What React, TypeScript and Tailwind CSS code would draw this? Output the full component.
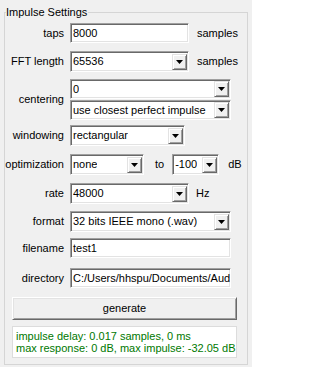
import React from 'react'

const sunken =
  'border border-t-[#a0a0a0] border-l-[#a0a0a0] border-b-white border-r-white shadow-[inset_1px_1px_0_#696969,inset_-1px_-1px_0_#e3e3e3] bg-white'

function Arrow() {
  return (
    <span className="flex h-[16px] w-[15px] shrink-0 items-center justify-center border border-t-[#e3e3e3] border-l-[#e3e3e3] border-b-[#696969] border-r-[#696969] bg-[#f0f0f0] shadow-[inset_1px_1px_0_#ffffff,inset_-1px_-1px_0_#a0a0a0]">
      <svg width="7" height="4" viewBox="0 0 7 4">
        <path d="M0 0h7L3.5 4z" fill="#000" />
      </svg>
    </span>
  )
}

function Combo({ value, w, h = 21 }: { value: string; w: string; h?: number }) {
  return (
    <div
      className={`${sunken} ${w} ${h === 21 ? 'h-[21px]' : 'h-[20px]'} flex shrink-0 items-center justify-between pl-[2px] pr-[1px]`}
    >
      <span className="truncate">{value}</span>
      <Arrow />
    </div>
  )
}

function Edit({ value, w }: { value: string; w: string }) {
  return (
    <div className={`${sunken} ${w} flex h-[20px] shrink-0 items-center overflow-hidden whitespace-nowrap pl-[2px]`}>
      {value}
    </div>
  )
}

function Row({ label, mt, children }: { label: string; mt: string; children: React.ReactNode }) {
  return (
    <div className={`flex items-center ${mt}`}>
      <span className="w-[59px] shrink-0 text-right">{label}</span>
      <div className="ml-[6px] flex items-center">{children}</div>
    </div>
  )
}

export default function App() {
  return (
    <div
      className="h-[367px] w-[252px] overflow-hidden bg-[#f0f0f0] pt-[12px] pl-[4px] text-[11px] leading-[13px] text-black"
      style={{ fontFamily: '"Liberation Sans", Arial, sans-serif' }}
    >
      <div className="relative h-[353px] w-[244px] border border-[#d5d5d5]">
        <span className="absolute -top-[7px] left-[1px] bg-[#f0f0f0] pr-[1px]">Impulse Settings</span>

        <Row label="taps" mt="mt-[10px]">
          <Edit value="8000" w="w-[119px]" />
          <span className="ml-[8px]">samples</span>
        </Row>

        <Row label="FFT length" mt="mt-[8px]">
          <Combo value="65536" w="w-[119px]" />
          <span className="ml-[8px]">samples</span>
        </Row>

        <Row label="centering" mt="mt-[7px]">
          <div className="flex flex-col gap-[1px]">
            <Combo value="0" w="w-[161px]" h={20} />
            <Combo value="use closest perfect impulse" w="w-[161px]" h={20} />
          </div>
        </Row>

        <Row label="windowing" mt="mt-[5px]">
          <Combo value="rectangular" w="w-[115px]" />
        </Row>

        <Row label="optimization" mt="mt-[8px]">
          <Combo value="none" w="w-[74px]" />
          <span className="ml-[11px]">to</span>
          <Combo value="-100" w="w-[47px] ml-[8px]" />
          <span className="ml-[9px]">dB</span>
        </Row>

        <Row label="rate" mt="mt-[8px]">
          <Combo value="48000" w="w-[119px]" />
          <span className="ml-[7px]">Hz</span>
        </Row>

        <Row label="format" mt="mt-[7px]">
          <Combo value="32 bits IEEE mono (.wav)" w="w-[161px]" />
        </Row>

        <Row label="filename" mt="mt-[6px]">
          <Edit value="test1" w="w-[161px]" />
        </Row>

        <Row label="directory" mt="mt-[10px]">
          <Edit value="C:/Users/hhspu/Documents/Audi" w="w-[161px]" />
        </Row>

        <button className="mt-[9px] ml-[7px] flex h-[23px] w-[225px] items-center justify-center border border-t-white border-l-white border-b-[#696969] border-r-[#696969] bg-[#f0f0f0] shadow-[inset_1px_1px_0_#e3e3e3,inset_-1px_-1px_0_#a0a0a0]">
          generate
        </button>

        <div className="mt-[6px] ml-[7px] h-[32px] w-[225px] border border-[#dcdcdc] bg-white pl-[3px] pt-[3px] leading-[12px] text-[#007800]">
          <div>impulse delay: 0.017 samples, 0 ms</div>
          <div>max response: 0 dB, max impulse: -32.05 dB</div>
        </div>
      </div>
    </div>
  )
}
